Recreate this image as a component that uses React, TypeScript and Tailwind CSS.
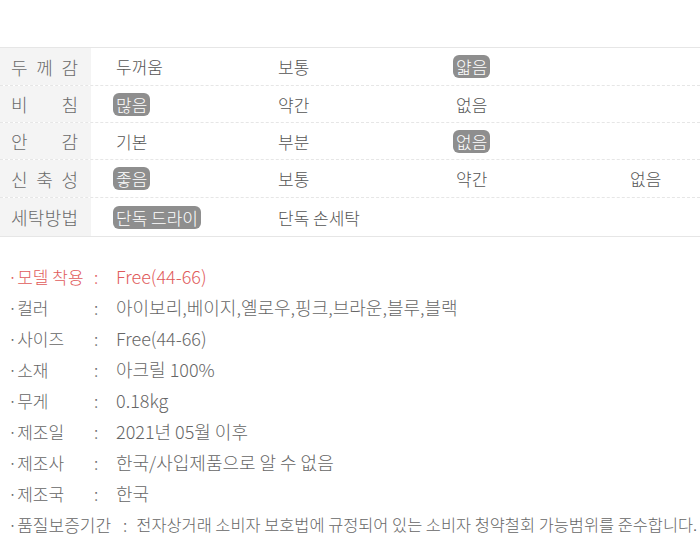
const font = { fontFamily: '"Noto Sans CJK KR", "Noto Sans", sans-serif' };

type Cell = { text: string; on?: boolean };

const rows: { label: string[]; h: string; cells: Cell[] }[] = [
  { label: ["두", "께", "감"], h: "h-[38px]", cells: [{ text: "두꺼움" }, { text: "보통" }, { text: "얇음", on: true }, { text: "" }] },
  { label: ["비", "침"], h: "h-[37px]", cells: [{ text: "많음", on: true }, { text: "약간" }, { text: "없음" }, { text: "" }] },
  { label: ["안", "감"], h: "h-[37px]", cells: [{ text: "기본" }, { text: "부분" }, { text: "없음", on: true }, { text: "" }] },
  { label: ["신", "축", "성"], h: "h-[38px]", cells: [{ text: "좋음", on: true }, { text: "보통" }, { text: "약간" }, { text: "없음" }] },
  { label: ["세", "탁", "방", "법"], h: "h-[38px]", cells: [{ text: "단독 드라이", on: true }, { text: "단독 손세탁" }, { text: "" }, { text: "" }] },
];

const info = [
  { label: "·모델 착용", value: "Free(44-66)", red: true },
  { label: "·컬러", value: "아이보리,베이지,옐로우,핑크,브라운,블루,블랙" },
  { label: "·사이즈", value: "Free(44-66)" },
  { label: "·소재", value: "아크릴 100%" },
  { label: "·무게", value: "0.18kg" },
  { label: "·제조일", value: "2021년 05월 이후" },
  { label: "·제조사", value: "한국/사입제품으로 알 수 없음" },
  { label: "·제조국", value: "한국" },
];

export default function App() {
  return (
    <div className="w-[700px] h-[554px] bg-white overflow-hidden font-light" style={font}>
      <div className="mt-[47px] border-t border-b border-[#e6e6e6]">
        {rows.map((row, i) => (
          <div
            key={i}
            className={`flex ${row.h} ${i < rows.length - 1 ? "border-b border-dashed border-[#e6e6e6]" : ""}`}
          >
            <div className="w-[91px] shrink-0 bg-[#f4f4f4] flex items-center pl-[11px]">
              <div className="w-[67px] flex justify-between text-[18px] text-[#6a6a6a] leading-none">
                {row.label.map((c, j) => (
                  <span key={j}>{c}</span>
                ))}
              </div>
            </div>
            {row.cells.map((cell, j) => (
              <div
                key={j}
                className={`flex items-center ${
                  j === 0 ? "w-[184px] pl-[22px]" : j === 1 ? "w-[178px]" : j === 2 ? "w-[174px]" : "flex-1"
                }`}
              >
                {cell.text && (
                  <span
                    className={`px-[3px] text-[17px] leading-[23px] ${
                      cell.on ? "bg-[#8e8e8e] text-white rounded-[6px]" : "text-[#555]"
                    }`}
                  >
                    {cell.text}
                  </span>
                )}
              </div>
            ))}
          </div>
        ))}
      </div>

      <div className="mt-[24px] pl-[8px] text-[#666]">
        {info.map((it, i) => (
          <div key={i} className={`flex items-center h-[31px] ${it.red ? "text-[#df5b5b]" : ""}`}>
            <span className="w-[86px] shrink-0 text-[17px]">{it.label}</span>
            <span className="w-[22px] shrink-0 text-[17px]">:</span>
            <span className="whitespace-nowrap text-[18px]">{it.value}</span>
          </div>
        ))}
        <div className="flex items-center h-[31px] whitespace-nowrap">
          <span className="shrink-0 text-[17px]">·품질보증기간</span>
          <span className="shrink-0 ml-[12px] mr-[9px] text-[17px]">:</span>
          <span className="text-[16.4px]">전자상거래 소비자 보호법에 규정되어 있는 소비자 청약철회 가능범위를 준수합니다.</span>
        </div>
      </div>
    </div>
  );
}
